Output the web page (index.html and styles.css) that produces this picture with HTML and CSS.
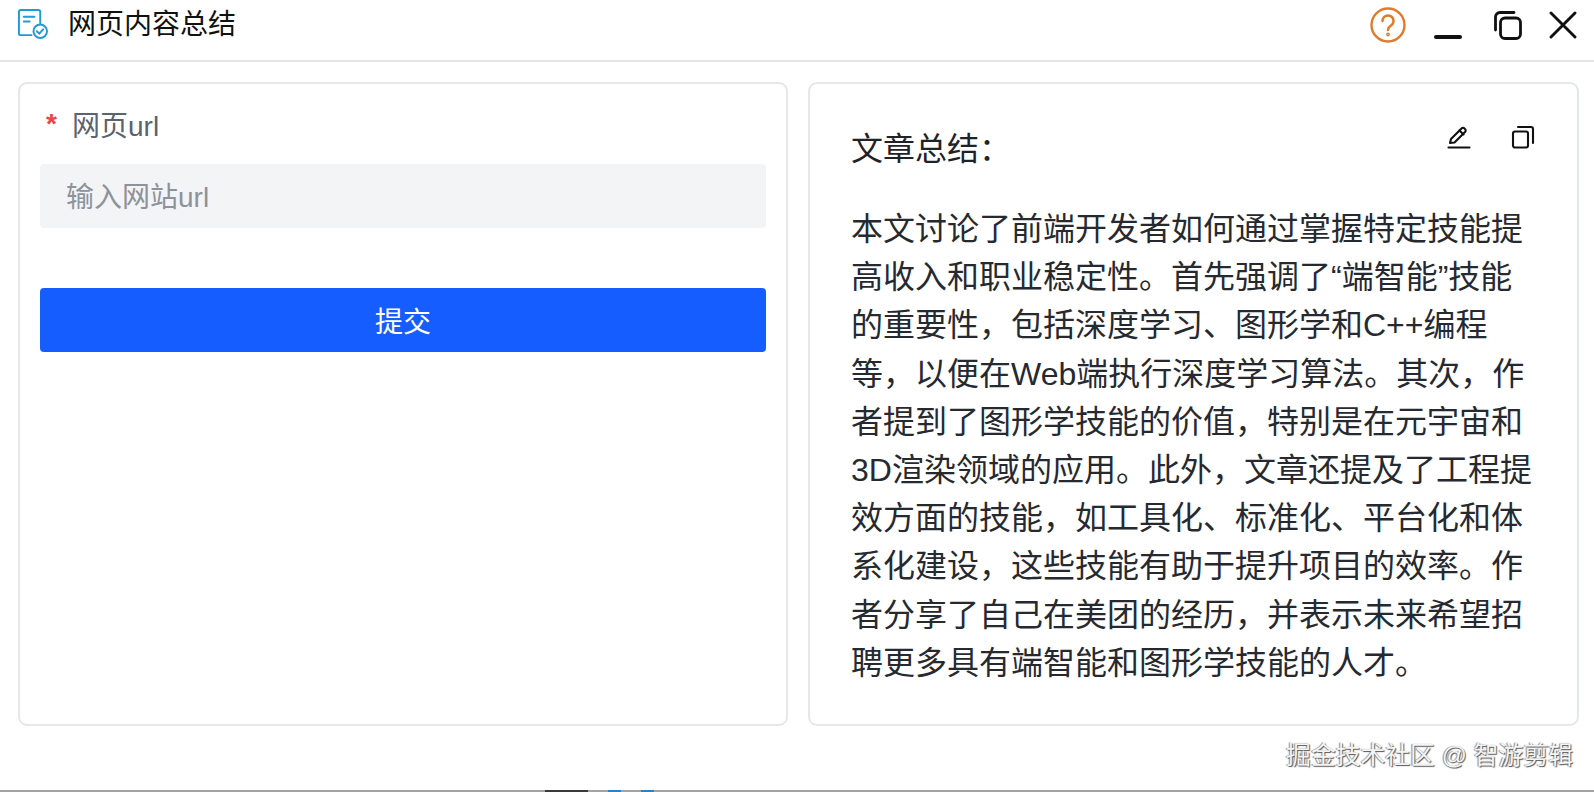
FILE: index.html
```html
<!DOCTYPE html>
<html lang="zh-CN">
<head>
<meta charset="UTF-8" />
<meta name="viewport" content="width=device-width, initial-scale=1" />
<title>网页内容总结</title>
<link rel="stylesheet" href="styles.css">
</head>
<body>

<header class="titlebar">
  <svg class="app-icon" viewBox="0 0 32 32" fill="none" stroke="#1f9bd8" stroke-width="2" stroke-linecap="round">
    <path d="M15 28H4a2 2 0 0 1-2-2V4a2 2 0 0 1 2-2h18a2 2 0 0 1 2 2v12"/>
    <path d="M7 9h11M7 14h6"/>
    <circle cx="24" cy="24" r="7"/>
    <path d="M20.5 24l2.5 2.5 4-4.5"/>
  </svg>
  <div class="app-title">网页内容总结</div>
  <div class="window-btns">
    <svg class="help-icon" viewBox="0 0 36 36" fill="none" stroke="#e07b2c" stroke-width="2.400" stroke-linecap="round">
      <circle cx="18" cy="18" r="16.500"/>
      <path d="M12.500 14a5.500 5.500 0 1 1 8.500 4.600c-2 1.300-3 2.300-3 4.400"/>
      <circle cx="18" cy="27.500" r="0.700"/>
    </svg>
    <svg class="win-icon win-min" viewBox="0 0 28 28" fill="none" stroke="#111" stroke-width="4" stroke-linecap="round">
      <path d="M2 26h24"/>
    </svg>
    <svg class="win-icon win-max" viewBox="0 0 28 29" fill="none" stroke="#111" stroke-width="2.800" stroke-linecap="round">
      <rect x="6.500" y="7" width="20" height="20.500" rx="4.500"/>
      <path d="M1.500 19V6a4.500 4.500 0 0 1 4.500-4.500h14"/>
    </svg>
    <svg class="win-icon" viewBox="0 0 28 28" fill="none" stroke="#111" stroke-width="2.900" stroke-linecap="round">
      <path d="M2 2l24 24M26 2L2 26"/>
    </svg>
  </div>
</header>

<main class="panels">
  <section class="card form-card">
    <label class="field-label"><span class="required">*</span>网页url</label>
    <div class="url-input">输入网站url</div>
    <button class="submit-btn">提交</button>
  </section>

  <section class="card result-card">
    <div class="result-head">
      <div class="result-title">文章总结：</div>
      <div class="result-tools">
        <svg class="tool-icon" viewBox="0 0 24 24" fill="none" stroke="#111" stroke-width="2.100" stroke-linejoin="round" stroke-linecap="round">
          <path d="M3 18l1-4L14.500 3.500a2 2 0 0 1 3 0l.5.5a2 2 0 0 1 0 3L7.500 17.500z"/>
          <path d="M12.500 5.500l4 4"/>
          <path d="M1.500 22.500h21"/>
        </svg>
        <svg class="tool-icon" viewBox="0 0 24 24" fill="none" stroke="#111" stroke-width="2.100" stroke-linejoin="round" stroke-linecap="round">
          <rect x="2" y="6.500" width="15" height="16" rx="2"/>
          <path d="M7 2h13a2 2 0 0 1 2 2v14"/>
        </svg>
      </div>
    </div>
    <p class="result-text">本文讨论了前端开发者如何通过掌握特定技能提<br>高收入和职业稳定性。首先强调了“端智能”技能<br>的重要性，包括深度学习、图形学和C++编程<br>等，以便在Web端执行深度学习算法。其次，作<br>者提到了图形学技能的价值，特别是在元宇宙和<br>3D渲染领域的应用。此外，文章还提及了工程提<br>效方面的技能，如工具化、标准化、平台化和体<br>系化建设，这些技能有助于提升项目的效率。作<br>者分享了自己在美团的经历，并表示未来希望招<br>聘更多具有端智能和图形学技能的人才。</p>
  </section>
</main>

<footer class="watermark">掘金技术社区 @ 智游剪辑</footer>

<div class="dock-strip">
  <span class="dock-dark"></span>
  <span class="dock-blue"></span>
  <span class="dock-blue"></span>
</div>

</body>
</html>
```

FILE: styles.css
```css
html, body {
  margin: 0;
  padding: 0;
  height: 100%;
}

body {
  width: 1594px;
  height: 792px;
  overflow: hidden;
  display: flex;
  flex-direction: column;
  background: #fff;
  color: #1f2329;
  font-family: "Liberation Sans", "Noto Sans CJK SC", sans-serif;
}

.titlebar {
  height: 60px;
  flex: none;
  display: flex;
  align-items: center;
  padding: 0 17px 0 17px;
  border-bottom: 2px solid #e5e5e5;
}

.app-icon {
  width: 31px;
  height: 31px;
  margin-bottom: 14px;
}

.app-title {
  margin-left: 20px;
  margin-bottom: 11px;
  font-size: 28px;
  line-height: 36px;
  color: #111;
}

.window-btns {
  margin-left: auto;
  display: flex;
  align-items: center;
  gap: 27px;
  margin-bottom: 10px;
}

.help-icon {
  width: 36px;
  height: 36px;
  margin-right: 1px;
}

.win-icon {
  width: 28px;
  height: 28px;
}

.win-max {
  height: 29px;
  margin-left: 5px;
}

.panels {
  flex: none;
  display: flex;
  gap: 20px;
  padding: 20px 15px 0 18px;
}

.card {
  height: 644px;
  box-sizing: border-box;
  border: 2px solid #e5e7eb;
  border-radius: 9px;
  background: #fff;
}

.form-card {
  width: 770px;
  padding: 20px 20px 0 20px;
}

.field-label {
  display: flex;
  align-items: center;
  height: 40px;
  font-size: 28px;
  color: #5b6270;
}

.required {
  width: 32px;
  padding-left: 6px;
  box-sizing: border-box;
  font-weight: bold;
  color: #ef4444;
}

.url-input {
  margin-top: 20px;
  height: 64px;
  padding-left: 26px;
  padding-bottom: 2px;
  box-sizing: border-box;
  display: flex;
  align-items: center;
  border-radius: 4px;
  background: #f3f4f6;
  font-size: 28px;
  color: #8d929b;
}

.submit-btn {
  display: block;
  width: 100%;
  height: 64px;
  margin-top: 60px;
  border: none;
  border-radius: 4px;
  background: #165dff;
  color: #fff;
  font-family: inherit;
  font-size: 28px;
}

.result-card {
  width: 771px;
  padding: 0 40px 0 41px;
}

.result-head {
  height: 121px;
  display: flex;
  justify-content: space-between;
}

.result-title {
  margin-top: 45px;
  font-size: 32px;
  line-height: 40px;
}

.result-tools {
  display: flex;
  gap: 40px;
  margin-top: 41px;
  margin-right: 2px;
}

.tool-icon {
  width: 24px;
  height: 24px;
}

.result-text {
  margin: 0;
  font-size: 32px;
  line-height: 48.200px;
  white-space: nowrap;
  color: #262a30;
}

.watermark {
  flex: 1;
  padding: 12px 21px 0 0;
  text-align: right;
  font-size: 24.800px;
  line-height: 36px;
  color: #f4f4f4;
  text-shadow: 1px 1px 1px #555, -1px 0 1px #888;
}

.dock-strip {
  flex: none;
  height: 2px;
  display: flex;
  background: #a3a3a3;
  padding-left: 545px;
}

.dock-dark {
  width: 43px;
  background: #3a3a3a;
}

.dock-blue {
  width: 13px;
  margin-left: 20px;
  background: #2f80c0;
}
```
